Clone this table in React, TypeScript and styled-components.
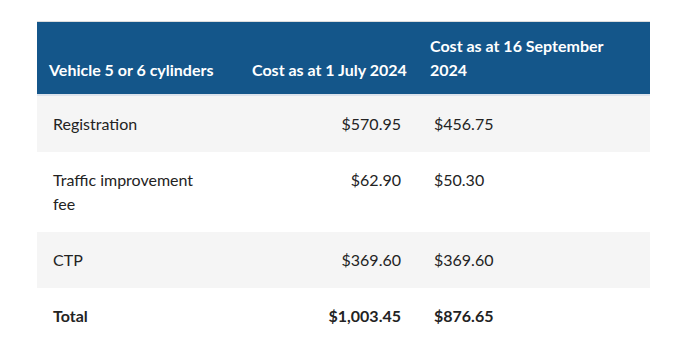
import React from "react"
import styled, { createGlobalStyle } from "styled-components"

const GlobalStyle = createGlobalStyle`
  body {
    margin: 0;
    background: #ffffff;
    font-family: Lato, "Open Sans", sans-serif;
  }
`

const Page = styled.div`
  padding: 21px 37px;
`

const Table = styled.table`
  width: 613px;
  border-collapse: collapse;
  table-layout: fixed;
  border-top: 1px solid #dcdcdc;
  font-size: 16px;
  line-height: 24px;
  color: #232323;

  th,
  td {
    box-sizing: border-box;
  }
`

const HeadRow = styled.tr`
  background: #14568a;
  border-bottom: 2px solid #dde3ec;
`

const HeadCell = styled.th<{ $width?: number }>`
  width: ${p => (p.$width ? `${p.$width}px` : "auto")};
  padding: 12px 6px 12px 12px;
  text-align: left;
  vertical-align: bottom;
  font-weight: 700;
  color: #ffffff;
`

const Row = styled.tr<{ $shaded?: boolean }>`
  background: ${p => (p.$shaded ? "#f5f5f5" : "#ffffff")};
`

const Cell = styled.td<{ $align?: "left" | "right"; $bold?: boolean }>`
  padding: 16px ${p => (p.$align === "right" ? "17px" : "16px")} 16px 16px;
  text-align: ${p => p.$align || "left"};
  vertical-align: top;
  font-weight: ${p => (p.$bold ? 700 : 400)};
`

const NameText = styled.span`
  display: block;
  max-width: 160px;
`

type Fee = {
  name: string
  july: string
  september: string
  total?: boolean
}

const fees: Fee[] = [
  { name: "Registration", july: "$570.95", september: "$456.75" },
  { name: "Traffic improvement fee", july: "$62.90", september: "$50.30" },
  { name: "CTP", july: "$369.60", september: "$369.60" },
  { name: "Total", july: "$1,003.45", september: "$876.65", total: true },
]

export default function App() {
  return (
    <Page>
      <GlobalStyle />
      <Table>
        <thead>
          <HeadRow>
            <HeadCell $width={203}>Vehicle 5 or 6 cylinders</HeadCell>
            <HeadCell $width={178}>Cost as at 1 July 2024</HeadCell>
            <HeadCell>Cost as at 16 September 2024</HeadCell>
          </HeadRow>
        </thead>
        <tbody>
          {fees.map((fee, i) => (
            <Row key={fee.name} $shaded={i % 2 === 0}>
              <Cell $bold={fee.total}>
                <NameText>{fee.name}</NameText>
              </Cell>
              <Cell $align="right" $bold={fee.total}>
                {fee.july}
              </Cell>
              <Cell $bold={fee.total}>{fee.september}</Cell>
            </Row>
          ))}
        </tbody>
      </Table>
    </Page>
  )
}
